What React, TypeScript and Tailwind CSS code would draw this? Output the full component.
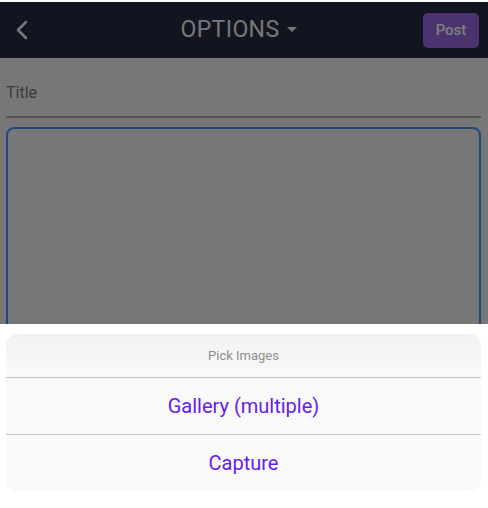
import React from 'react';

const App: React.FC = () => {
  return (
    <div className="relative w-[488px] h-[508px] overflow-hidden bg-white font-['Roboto',sans-serif]">
      <div className="h-[2px] bg-white" />
      <div className="h-[56px] bg-[#24283e] flex items-center justify-between px-[12px] shadow-md">
        <svg width="18" height="24" viewBox="0 0 18 24" className="ml-[2px]">
          <path d="M12 4 L4 12 L12 20" fill="none" stroke="#eeeeee" strokeWidth="2.6" strokeLinecap="round" strokeLinejoin="round" />
        </svg>
        <div className="flex items-center gap-[7px] ml-[22px]">
          <span className="text-[23px] text-[#eeeeee] tracking-[0.4px]">OPTIONS</span>
          <svg width="10" height="6" viewBox="0 0 10 6">
            <path d="M0 0 L10 0 L5 5 Z" fill="#eeeeee" />
          </svg>
        </div>
        <button className="w-[56px] h-[35px] rounded-[5px] bg-[#9466e0] text-white text-[15px] font-medium -mr-[3px]">
          Post
        </button>
      </div>
      <div className="bg-[#eeeeee] h-[450px] px-[6px] pr-[7px]">
        <div className="pt-[23px] pb-[11px] border-b-2 border-[#aaaaaa] text-[16px] text-[#777777]">
          Title
        </div>
        <div className="mt-[9px] h-[300px] rounded-[8px] border-2 border-[#3c94ff]" />
      </div>

      {/* modal backdrop */}
      <div className="absolute left-0 right-0 bottom-0 top-[2px] bg-black/50" />

      {/* action sheet */}
      <div className="absolute left-0 right-0 bottom-0 h-[184px] bg-white pt-[10px]">
        <div className="ml-[6px] w-[475px] rounded-[12px] overflow-hidden bg-[#f9f9f9]">
          <div className="h-[44px] flex items-center justify-center bg-gradient-to-b from-[#f2f2f2] to-[#f9f9f9] text-[13px] text-[#8e8e8e] border-b border-[#c6c6c6]">
            Pick Images
          </div>
          <div className="h-[57px] flex items-center justify-center text-[20px] text-[#6320ee] border-b border-[#c6c6c6]">
            Gallery (multiple)
          </div>
          <div className="h-[56px] flex items-center justify-center text-[20px] text-[#6320ee]">
            Capture
          </div>
        </div>
      </div>
    </div>
  );
};

export default App;
